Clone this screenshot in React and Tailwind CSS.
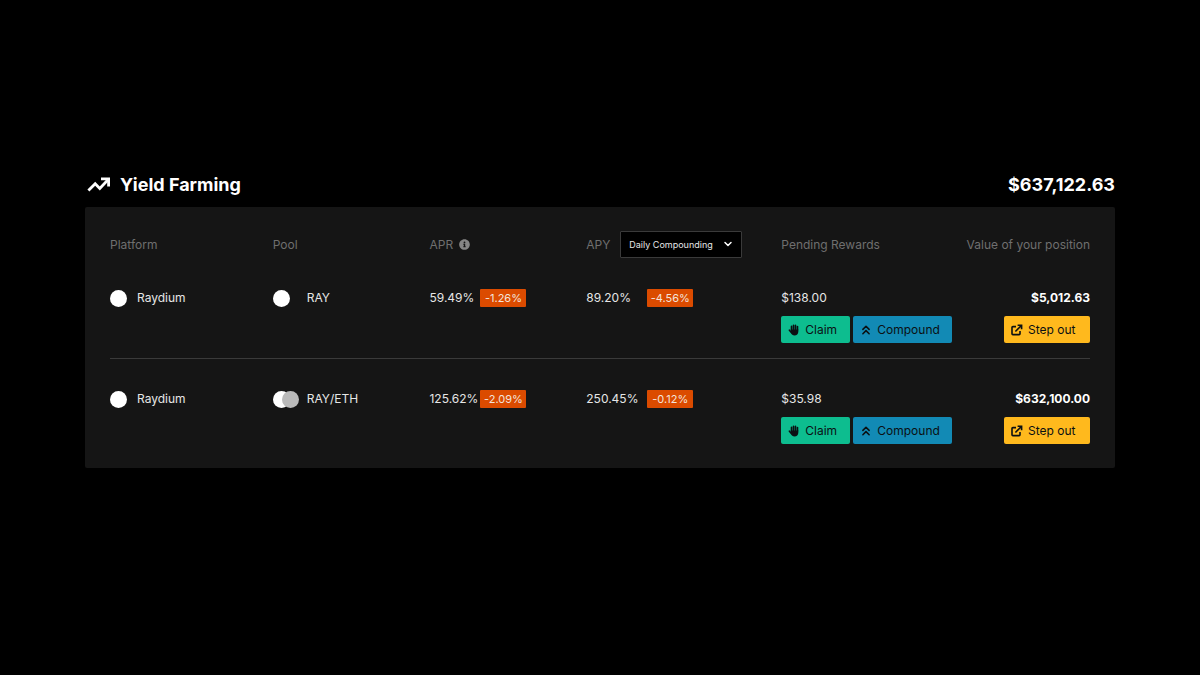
import React, { useState } from 'react';
import { FaInfoCircle } from 'react-icons/fa';
import { ChevronDown, ChevronsUp } from 'lucide-react';

const positions = [
  {
    id: 1,
    platform: 'Raydium',
    pool: 'RAY',
    tokens: ['bg-white'],
    apr: '59.49%',
    aprChange: '-1.26%',
    apy: '89.20%',
    apyChange: '-4.56%',
    rewards: '$138.00',
    value: '$5,012.63',
  },
  {
    id: 2,
    platform: 'Raydium',
    pool: 'RAY/ETH',
    tokens: ['bg-white', 'bg-[#bababa]'],
    apr: '125.62%',
    aprChange: '-2.09%',
    apy: '250.45%',
    apyChange: '-0.12%',
    rewards: '$35.98',
    value: '$632,100.00',
  },
];

const TrendIcon = () => (
  <svg viewBox="0 0 24 24" className="size-6" fill="none" stroke="currentColor" strokeWidth="2.8" aria-hidden="true">
    <path d="M1.4 17.6 8.2 10.8 12.8 15.4 21 6.8" />
    <path d="M14 5.8h7.6v7.8" />
  </svg>
);

const HandIcon = () => (
  <svg viewBox="0 0 12 12" className="size-3" fill="none" stroke="currentColor" strokeLinecap="round" aria-hidden="true">
    <path d="M3.5 6V2.4M5.5 6V1.2M7.5 6V1.4M9.5 6V2.6" strokeWidth="1.6" />
    <path d="M1.4 6.2 3.4 8.6" strokeWidth="1.6" />
    <path
      d="M2.7 5.5h7.6v2.2c0 2.2-1.6 3.7-3.8 3.7-1.8 0-2.9-.9-3.6-2.4z"
      fill="currentColor"
      stroke="none"
    />
  </svg>
);

const ExternalIcon = () => (
  <svg viewBox="0 0 12 12" className="size-3" fill="none" stroke="currentColor" strokeWidth="1.6" aria-hidden="true">
    <path d="M5 2.6H1.9a.9.9 0 0 0-.9.9v6.2c0 .5.4.9.9.9h6.2c.5 0 .9-.4.9-.9V7" />
    <path d="M6.6 1.3h4v4M10.4 1.5 4.4 7.5" />
  </svg>
);

const Change = ({ children }) => (
  <span className="inline-flex h-[18px] w-[46px] items-center justify-center rounded-[1px] bg-[#db4b00] text-[11px] text-[#f3e3dc]">
    {children}
  </span>
);

const ActionButton = ({ icon, color, children }) => (
  <button type="button" className={`inline-flex h-[27px] items-center gap-[5px] rounded-[2px] pl-[7px] text-xs text-[#0b1013] ${color}`}>
    {icon}
    {children}
  </button>
);

const PositionRow = ({ position, last }) => (
  <tr className={`align-top text-xs leading-5 text-[#e6e6e6] ${last ? '' : 'border-b border-[#3a3a3a]'}`}>
    <td className="pt-[30px]">
      <div className="flex items-center gap-[10px]">
        <span className="size-[17px] rounded-full bg-white" />
        {position.platform}
      </div>
    </td>
    <td className="pt-[30px]">
      <div className="flex items-center">
        <div className="flex w-[34px]">
          {position.tokens.map((token) => (
            <span key={token} className={`-mr-2 size-[17px] shrink-0 rounded-full ${token}`} />
          ))}
        </div>
        {position.pool}
      </div>
    </td>
    <td className="pt-[30px]">
      <div className="flex items-center">
        <span className="w-[51px]">{position.apr}</span>
        <Change>{position.aprChange}</Change>
      </div>
    </td>
    <td className="pt-[30px]">
      <div className="flex items-center">
        <span className="w-[61px]">{position.apy}</span>
        <Change>{position.apyChange}</Change>
      </div>
    </td>
    <td className={last ? 'pt-[30px]' : 'pt-[30px] pb-[15px]'}>
      <div>{position.rewards}</div>
      <div className="mt-2 flex gap-[3px]">
        <ActionButton icon={<HandIcon />} color="w-[69px] bg-[#0dbd8f]">
          Claim
        </ActionButton>
        <ActionButton
          icon={<ChevronsUp className="size-3 scale-125" strokeWidth={2.5} />}
          color="w-[99px] bg-[#128ab5]"
        >
          Compound
        </ActionButton>
      </div>
    </td>
    <td className="pt-[30px] text-right">
      <div className="font-bold text-white">{position.value}</div>
      <div className="mt-2 flex justify-end">
        <ActionButton icon={<ExternalIcon />} color="w-[86px] bg-[#ffb91d]">
          Step out
        </ActionButton>
      </div>
    </td>
  </tr>
);

const App = () => {
  const [compounding, setCompounding] = useState('daily');

  return (
    <main className="min-h-screen bg-black px-[85px] pt-[171px] pb-10 font-['Inter','Liberation_Sans',sans-serif] text-white">
      <header className="flex h-7 items-center justify-between text-lg font-bold">
        <h1 className="flex items-center gap-[9px]">
          <span className="pl-[2px]"><TrendIcon /></span>
          Yield Farming
        </h1>
        <span>$637,122.63</span>
      </header>

      <section className="mt-2 rounded-[2px] bg-[#151515] px-[25px] py-6">
        <table className="w-full table-fixed border-collapse text-left">
          <colgroup>
            <col className="w-[16.6%]" />
            <col className="w-[16%]" />
            <col className="w-[16%]" />
            <col className="w-[19.9%]" />
            <col className="w-[18%]" />
            <col />
          </colgroup>
          <thead>
            <tr className="text-xs text-[#6f6f6f] [&>th]:font-normal [&>th]:whitespace-nowrap">
              <th>Platform</th>
              <th>Pool</th>
              <th>
                <div className="flex items-center gap-[6px]">
                  APR
                  <FaInfoCircle className="size-[11px] text-[#858585]" />
                </div>
              </th>
              <th>
                <div className="flex items-center">
                  <label htmlFor="compounding" className="w-[34px]">APY</label>
                  <div className="relative">
                    <select
                      id="compounding"
                      value={compounding}
                      onChange={(e) => setCompounding(e.target.value)}
                      className="block h-[27px] w-[122px] appearance-none rounded-[1px] border border-[#3a3a3a] bg-black pl-2 text-[9px] text-[#e6e6e6]"
                    >
                      <option value="daily">Daily Compounding</option>
                      <option value="weekly">Weekly Compounding</option>
                    </select>
                    <ChevronDown
                      className="pointer-events-none absolute top-[7px] right-2 size-3 text-white"
                      strokeWidth={3}
                    />
                  </div>
                </div>
              </th>
              <th>Pending Rewards</th>
              <th className="text-right">Value of your position</th>
            </tr>
          </thead>
          <tbody>
            {positions.map((position, index) => (
              <PositionRow key={position.id} position={position} last={index === positions.length - 1} />
            ))}
          </tbody>
        </table>
      </section>
    </main>
  );
};

export default App;
